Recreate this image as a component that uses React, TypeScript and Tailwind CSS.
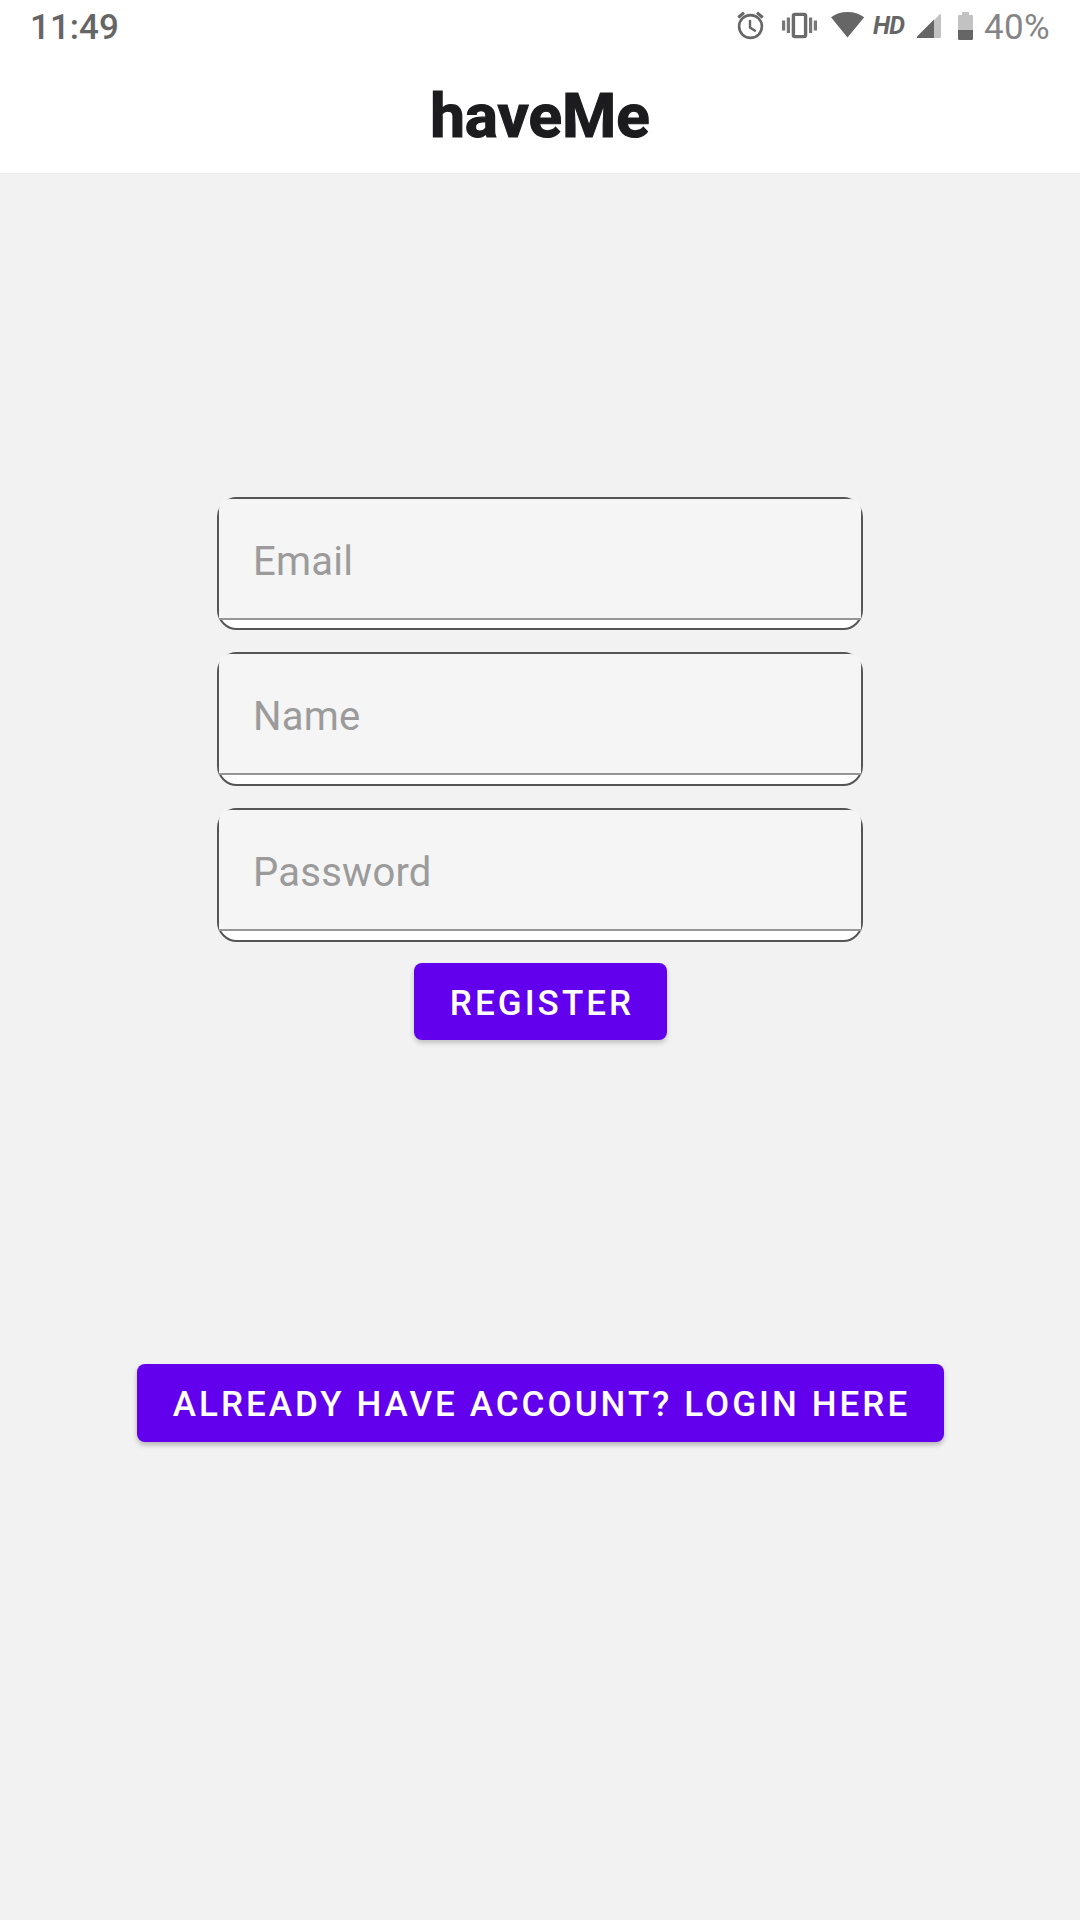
import React from "react";

function StatusIcons() {
  return (
    <svg width="320" height="48" viewBox="720 0 320 48" className="block h-12 w-[270px]" preserveAspectRatio="xMinYMin slice">
      {/* alarm */}
      <g fill="none" stroke="#666" strokeWidth="2.6">
        <circle cx="750.5" cy="26.5" r="11.4" />
        <path d="M750 20v7.500l5.800 3.700" strokeWidth="2.4" />
        <path d="M738.300 17.500l5.700-4.800M762.700 17.500l-5.700-4.800" strokeWidth="3" />
      </g>
      {/* vibrate */}
      <rect x="793.400" y="14.400" width="12.200" height="22.200" rx="1.500" fill="none" stroke="#6b6b6b" strokeWidth="3.400" />
      <path d="M782 20.500h3.200v10h-3.200zM786.800 17.500h3.200v15.500h-3.200zM809 17.500h3.200v15.500h-3.200zM813.800 20.500h3.200v10h-3.200z" fill="#777" />
      {/* wifi */}
      <path d="M831 17.200Q838 12 847.500 12T864.200 17.200L847.500 37.500Z" fill="#666" />
      <text x="873" y="34" fontFamily="Roboto" fontWeight="700" fontStyle="italic" fontSize="25" textLength="32" fill="#666">HD</text>
      {/* mobile signal */}
      <path d="M917 38L939.500 14.500Q941 13.500 941 15V37Q941 38 940 38Z" fill="#c2c2c2" />
      <path d="M917 38V36.500L934 19.500V38Z" fill="#666" />
      {/* battery */}
      <path d="M962 12h7v3h3Q973 15 973 16.300V30H958V16.300Q958 15 959.300 15H962Z" fill="#c2c2c2" />
      <path d="M958 30h15v8.700q0 1.300-1.300 1.300h-12.400q-1.300 0-1.300-1.300z" fill="#666" />
    </svg>
  );
}

function Field({ label, className }: { label: string; className: string }) {
  return (
    <div className={`w-[646px] rounded-[20px] border-2 border-[#555] bg-white ${className}`}>
      <div className="flex h-[121px] items-center rounded-t-[10px] border-b-2 border-[#969696] bg-[#f5f5f5] pl-[34px] pt-[7px] text-[40px] leading-none tracking-[0.25px] text-[#9b9b9b]">
        {label}
      </div>
    </div>
  );
}

export default function App() {
  return (
    <div className="flex h-[1920px] w-[1080px] flex-col bg-[#f2f2f2] font-[Roboto,sans-serif]">
      <header className="h-[173px] bg-white shadow-[0_1px_2px_rgba(0,0,0,0.03)]">
        <div className="flex h-[54px] justify-between pl-[30px] pr-[31px] text-[35px] leading-[56px] text-[#666]">
          <span className="font-medium">11:49</span>
          <div className="flex">
            <StatusIcons />
            <span className="-ml-[6px] w-[65px] whitespace-nowrap tracking-[0.3px] text-[#858585]">40%</span>
          </div>
        </div>
        <h1 className="text-center text-[62px] font-bold leading-[124px] text-[#1c1c1e] [-webkit-text-stroke:1.2px_#1c1c1e]">haveMe</h1>
      </header>
      <main className="flex flex-col items-center pt-[324px]">
        <div className="flex flex-col gap-[22px]">
          <Field label="Email" className="h-[133px]" />
          <Field label="Name" className="h-[134px]" />
          <Field label="Password" className="h-[134px]" />
        </div>
        <button className="mt-[21px] h-[77px] w-[253px] rounded-lg bg-[#6200ee] pl-[4px] pt-[3px] text-[35px] font-medium leading-none tracking-[3.07px] text-white shadow-[0_3px_5px_rgba(0,0,0,0.2)]">
          REGISTER
        </button>
        <button className="mt-[324px] h-[78px] w-[807px] whitespace-nowrap rounded-lg bg-[#6200ee] pl-[3px] pt-[3px] text-[35px] font-medium leading-none tracking-[3.05px] text-white shadow-[0_3px_5px_rgba(0,0,0,0.25)]">
          ALREADY HAVE ACCOUNT? LOGIN HERE
        </button>
      </main>
    </div>
  );
}
